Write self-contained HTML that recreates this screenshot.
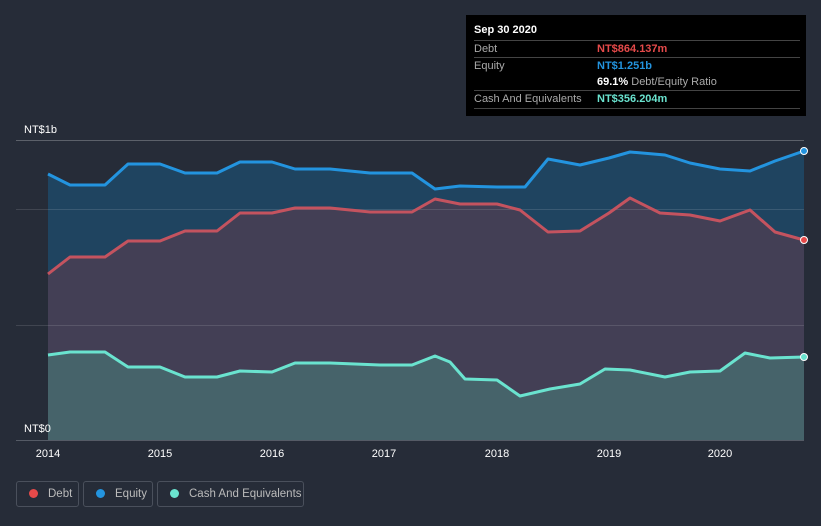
<!DOCTYPE html>
<html><head><meta charset="utf-8"><style>
html,body{margin:0;width:821px;height:526px;overflow:hidden}
body{background:#262c38;font-family:"Liberation Sans",sans-serif;position:relative}
.tip{position:absolute;left:466px;top:15px;width:340px;height:101px;background:#000;color:#fff;font-size:11px}
.row{position:absolute;left:8px;width:326px;border-top:1px solid #444;height:17px;line-height:17px}
.lab{color:#aaa;position:absolute;left:0}
.val{position:absolute;left:123px;font-weight:bold;white-space:nowrap}
.leg{position:absolute;top:481px;height:26px;border:1px solid #4a505c;border-radius:3px;color:#bbb;font-size:11.5px;line-height:24px;box-sizing:border-box;white-space:nowrap}
.dot{display:inline-block;width:9px;height:9px;border-radius:50%;margin:0 10px 0 12px;vertical-align:-1px}
</style></head><body>
<svg width="821" height="526" style="position:absolute;left:0;top:0">
<rect x="0" y="0" width="821" height="526" fill="#262c38"/>
<path d="M48 174L70 185L105 185L128 164L160 164L185 173L217 173L240 162L272 162L295 169L330 169L370 173L412 173L435 189L460 186L497 187L525 187L548 159L580 165L609 158L630 152L665 155L690 163L720 169L750 171L775 161L804 151L804 440L48 440Z" fill="#1f4460"/>
<path d="M48 274L70 257L105 257L128 241L160 241L185 231L217 231L240 213L272 213L295 208L330 208L370 212L412 212L435 199L460 204L497 204L520 210L548 232L580 231L609 213L630 198L660 213L690 215L720 221L750 210L775 232L804 240L804 440L48 440Z" fill="#433f55"/>
<path d="M48 355L70 352L105 352L128 367L160 367L185 377L217 377L240 371L272 372L295 363L330 363L380 365L412 365L435 356L450 362L465 379L497 380L520 396L550 389L580 384L605 369L630 370L665 377L690 372L720 371L745 353L770 358L804 357L804 440L48 440Z" fill="#46636a"/>
<g stroke="#ffffff" stroke-opacity="0.12" stroke-width="1">
<line x1="16" y1="140.5" x2="804" y2="140.5" stroke-opacity="0.25"/><line x1="16" y1="209.5" x2="804" y2="209.5"/><line x1="16" y1="325.5" x2="804" y2="325.5"/></g>
<line x1="16" y1="440.5" x2="804" y2="440.5" stroke="#555b66"/>
<g fill="none" stroke-width="3" stroke-linejoin="round">
<path d="M48 174L70 185L105 185L128 164L160 164L185 173L217 173L240 162L272 162L295 169L330 169L370 173L412 173L435 189L460 186L497 187L525 187L548 159L580 165L609 158L630 152L665 155L690 163L720 169L750 171L775 161L804 151" stroke="#2394df"/>
<path d="M48 274L70 257L105 257L128 241L160 241L185 231L217 231L240 213L272 213L295 208L330 208L370 212L412 212L435 199L460 204L497 204L520 210L548 232L580 231L609 213L630 198L660 213L690 215L720 221L750 210L775 232L804 240" stroke="#c4535f"/>
<path d="M48 355L70 352L105 352L128 367L160 367L185 377L217 377L240 371L272 372L295 363L330 363L380 365L412 365L435 356L450 362L465 379L497 380L520 396L550 389L580 384L605 369L630 370L665 377L690 372L720 371L745 353L770 358L804 357" stroke="#6ae3cf"/>
</g>
<circle cx="804" cy="151" r="3.5" fill="#2394df" stroke="#fff"/>
<circle cx="804" cy="240" r="3.5" fill="#e64a4a" stroke="#fff"/>
<circle cx="804" cy="357" r="3.5" fill="#6ae3cf" stroke="#fff"/>
<g fill="#fff" font-size="11" font-family="Liberation Sans">
<text x="24" y="133">NT$1b</text><text x="24" y="432">NT$0</text>
<g text-anchor="middle"><text x="48" y="457">2014</text><text x="160" y="457">2015</text><text x="272" y="457">2016</text><text x="384" y="457">2017</text><text x="497" y="457">2018</text><text x="609" y="457">2019</text><text x="720" y="457">2020</text></g></g>
</svg>
<div class="tip">
<div style="position:absolute;left:8px;top:9px;font-weight:bold">Sep 30 2020</div>
<div class="row" style="top:25px"><span class="lab">Debt</span><span class="val" style="color:#e64a4a">NT$864.137m</span></div>
<div class="row" style="top:42px"><span class="lab">Equity</span><span class="val" style="color:#2394df">NT$1.251b</span></div>
<div class="row" style="top:59px;border:0"><span class="val">69.1% <span style="color:#aaa;font-weight:normal">Debt/Equity Ratio</span></span></div>
<div class="row" style="top:75px;border-bottom:1px solid #444"><span class="lab">Cash And Equivalents</span><span class="val" style="color:#6ae3cf">NT$356.204m</span></div>
</div>
<div class="leg" style="left:16px;width:63px"><span class="dot" style="background:#e64a4a"></span>Debt</div>
<div class="leg" style="left:83px;width:70px"><span class="dot" style="background:#2394df"></span>Equity</div>
<div class="leg" style="left:157px;width:147px"><span class="dot" style="background:#6ae3cf"></span>Cash And Equivalents</div>
</body></html>
